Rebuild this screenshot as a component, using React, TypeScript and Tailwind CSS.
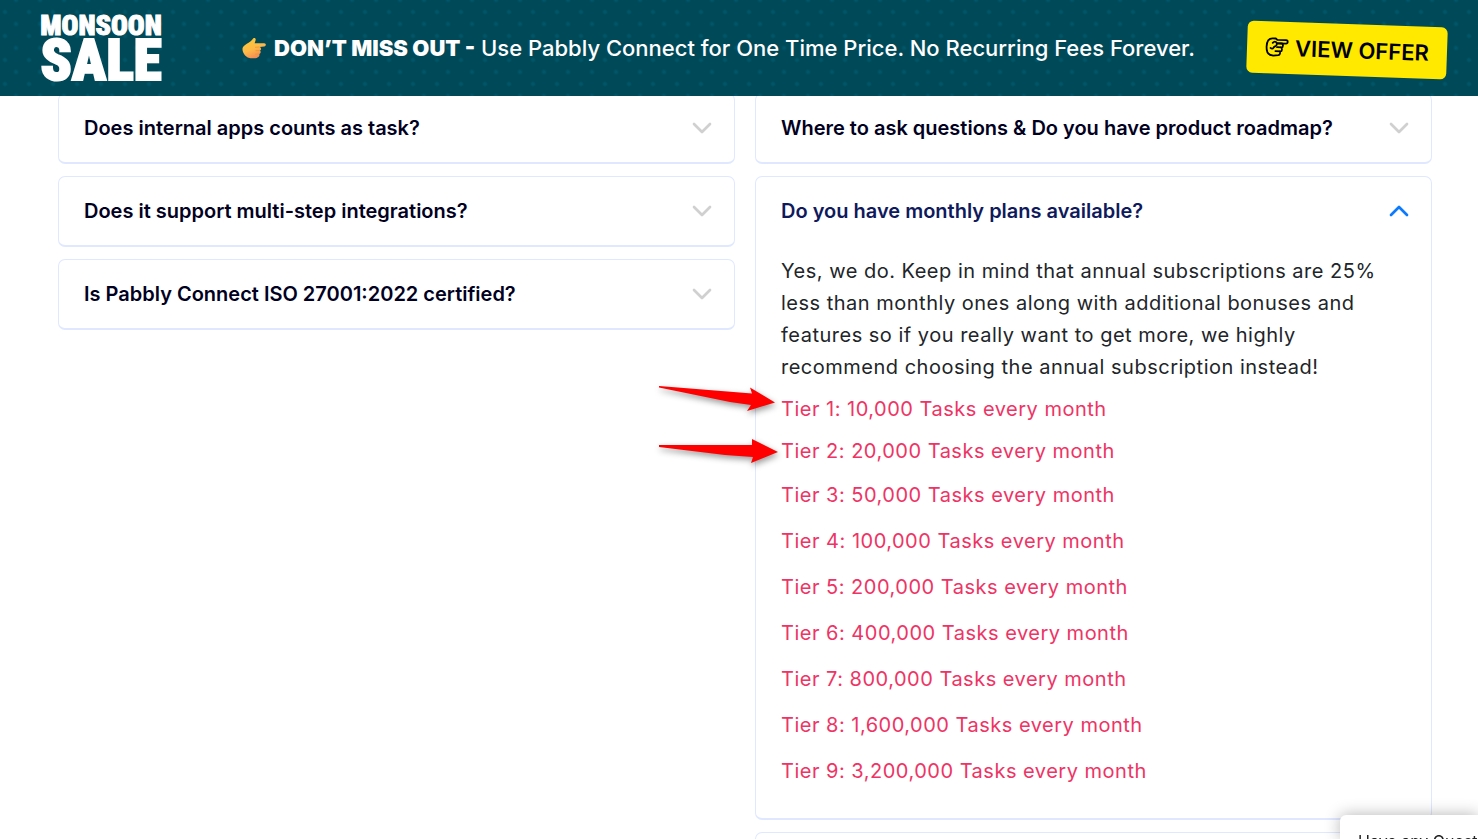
import { useState } from 'react';
import clsx from 'clsx';
import { ChevronDown, ChevronUp } from 'lucide-react';

interface Faq {
  question: string;
  answer?: string;
  points?: string[];
}

const LEFT: Faq[] = [
  { question: 'Does internal apps counts as task?' },
  { question: 'Does it support multi-step integrations?' },
  { question: 'Is Pabbly Connect ISO 27001:2022 certified?' },
];

const RIGHT: Faq[] = [
  { question: 'Where to ask questions & Do you have product roadmap?' },
  {
    question: 'Do you have monthly plans available?',
    answer:
      'Yes, we do. Keep in mind that annual subscriptions are 25% less than monthly ones along with additional bonuses and features so if you really want to get more, we highly recommend choosing the annual subscription instead!',
    points: [
      'Tier 1: 10,000 Tasks every month',
      'Tier 2: 20,000 Tasks every month',
      'Tier 3: 50,000 Tasks every month',
      'Tier 4: 100,000 Tasks every month',
      'Tier 5: 200,000 Tasks every month',
      'Tier 6: 400,000 Tasks every month',
      'Tier 7: 800,000 Tasks every month',
      'Tier 8: 1,600,000 Tasks every month',
      'Tier 9: 3,200,000 Tasks every month',
    ],
  },
];

function PointingHand() {
  return (
    <svg viewBox="0 0 24 22" className="h-[22px] w-6 shrink-0" aria-hidden="true">
      <defs>
        <linearGradient id="skin" x1="0" y1="0" x2="0.5" y2="1">
          <stop offset="0" stopColor="#fdcb2f" />
          <stop offset="0.6" stopColor="#fdba48" />
          <stop offset="1" stopColor="#f58b55" />
        </linearGradient>
      </defs>
      <path
        fill="url(#skin)"
        d="M1 10C3 7.500 6.500 6 9 4L11.200 1.500C12.400 .5 14.200 1.500 13.600 3.200L12.600 6.200H22.200C24.400 6.200 24.400 9.300 22.200 9.400L17.500 10C19.500 10.500 19.500 13 18 13.500C19.300 14.500 18.600 16.700 17.200 17C18 18.300 17 20 15.500 20.400C14 21.500 9 21.700 6.500 20.700C3 19.200 .3 15.500 .5 11.500Z"
      />
      <path
        fill="none"
        stroke="#e8962f"
        strokeWidth="0.8"
        d="M13 10.300L17.500 10M13.500 13.700L18 13.500M13 17.200L17.200 17"
      />
    </svg>
  );
}

function OutlineHand() {
  return (
    <svg
      viewBox="0 0 24 22"
      className="h-[22px] w-6 shrink-0"
      fill="none"
      stroke="currentColor"
      strokeWidth="1.8"
      strokeLinecap="round"
      strokeLinejoin="round"
      aria-hidden="true"
    >
      <path d="M5.500 18.500C2.500 17.500 1.500 13.500 1.500 10.500C1.500 5 4 2 7.500 2H10.500L12 3.300H20.800C23 3.300 23 6.800 20.800 6.800H12.500" />
      <path d="M7.500 6.500C9.500 4 12.500 5.500 11.500 8.500C11 10 9 9.800 8.500 11.200C7.800 12.800 6.500 12.500 5.500 11.500" />
      <path d="M12.500 6.800H16.500C18.300 6.800 18.300 10.600 16.500 10.600H12M15.800 10.600C17.600 11.200 17.300 14.600 15.500 14.600H10.500M14.500 14.600C16 15.400 15.200 18.300 13.500 18.600L8.500 19.200L5.500 18.500" />
    </svg>
  );
}

function SaleBanner() {
  return (
    <header className="fixed inset-x-0 top-0 z-20 flex h-24 items-center justify-between bg-[#004958] bg-[radial-gradient(circle,#005568_1px,transparent_3px),radial-gradient(circle,#005568_1px,transparent_3px)] bg-[length:24px_24px] bg-[position:-7px_0px,4px_-12px] pr-[31px] pl-10 text-white">
      <div className="flex w-[122px] flex-col items-center pt-1 font-['Roboto_Condensed',Roboto,sans-serif] font-black">
        <span className="text-[28px] leading-[22px] [-webkit-text-stroke:1px_white]">MONSOON</span>
        <span className="text-[57px] leading-[48px] [-webkit-text-stroke:2px_white]">SALE</span>
      </div>
      <p className="flex items-center gap-2 pl-7 text-[22px] font-medium">
        <PointingHand />
        <span>
          <strong className="font-black">DON’T MISS OUT -</strong> Use Pabbly Connect for One Time Price. No Recurring Fees
          Forever.
        </span>
      </p>
      <a
        href="#offer"
        className="mt-1 flex h-[52px] w-[200px] rotate-2 items-center justify-center gap-[6px] rounded-md bg-[#ffe900] text-[22px] font-semibold text-black"
      >
        <OutlineHand />
        VIEW OFFER
      </a>
    </header>
  );
}

function FaqCard({ faq }: { faq: Faq }) {
  const [open, setOpen] = useState(Boolean(faq.answer));
  const Icon = open ? ChevronUp : ChevronDown;
  return (
    <section className="rounded-[7px] border border-b-2 border-[#dfe8ff] bg-white">
      <h3>
        <button
          type="button"
          aria-expanded={open}
          onClick={() => setOpen(!open)}
          className={clsx(
            'flex h-[68px] w-full items-center justify-between pr-4 pl-[25px] text-left text-xl font-semibold',
            open ? 'text-[#0f1a5c]' : 'text-[#01011f]',
          )}
        >
          {faq.question}
          <Icon className={clsx('h-8 w-8', open ? 'text-[#0a7aff]' : 'text-[#d0d0d0]')} />
        </button>
      </h3>
      {open && faq.answer && (
        <div className="px-[25px] pt-[10px] pb-[17px] text-xl tracking-wide">
          <p className="leading-8 text-[#212529]">{faq.answer}</p>
          <ul className="mt-[10px] text-[#ee3465]">
            {faq.points?.map((point) => (
              <li key={point} className="mb-[14px] leading-8 first:mb-[10px] nth-2:mb-3">
                {point}
              </li>
            ))}
          </ul>
        </div>
      )}
    </section>
  );
}

/** Red call-out arrows drawn over the gutter between the two columns. */
function Arrows() {
  return (
    <svg
      viewBox="0 0 124 84"
      className="pointer-events-none absolute top-[203px] right-full -mr-6 h-[84px] w-[124px] drop-shadow-[1px_3px_3px_rgba(0,0,0,0.4)]"
      aria-hidden="true"
    >
      <g fill="#fe0000">
        <path d="M4 7L97 14.500L95 8.500L120 23.500L92 32L96 26L75 23L4 8.500Z" />
        <path d="M4 66L97 66L97 60L123 73L96 84L98 78L70 76L4 68Z" />
      </g>
    </svg>
  );
}

export default function App() {
  return (
    <div className="h-screen overflow-hidden bg-white font-[Inter,sans-serif]">
      <SaleBanner />
      <main className="grid grid-cols-2 items-start gap-5 pt-[93px] pr-[46px] pl-[58px]">
        <div className="flex flex-col gap-3">
          {LEFT.map((faq) => (
            <FaqCard key={faq.question} faq={faq} />
          ))}
        </div>
        <div className="flex flex-col gap-3">
          <FaqCard faq={RIGHT[0]} />
          <div className="relative">
            <FaqCard faq={RIGHT[1]} />
            <Arrows />
          </div>
          <div className="h-[71px] rounded-[7px] border border-b-2 border-[#dfe8ff]" />
        </div>
      </main>
      <aside className="fixed right-0 bottom-0 h-6 w-[138px] overflow-hidden rounded-tl-md bg-white pt-[14px] pl-[18px] text-base whitespace-nowrap text-[#222] shadow-[0_0_16px_rgba(0,0,0,0.3)]">
        Have any Questions?
      </aside>
    </div>
  );
}
